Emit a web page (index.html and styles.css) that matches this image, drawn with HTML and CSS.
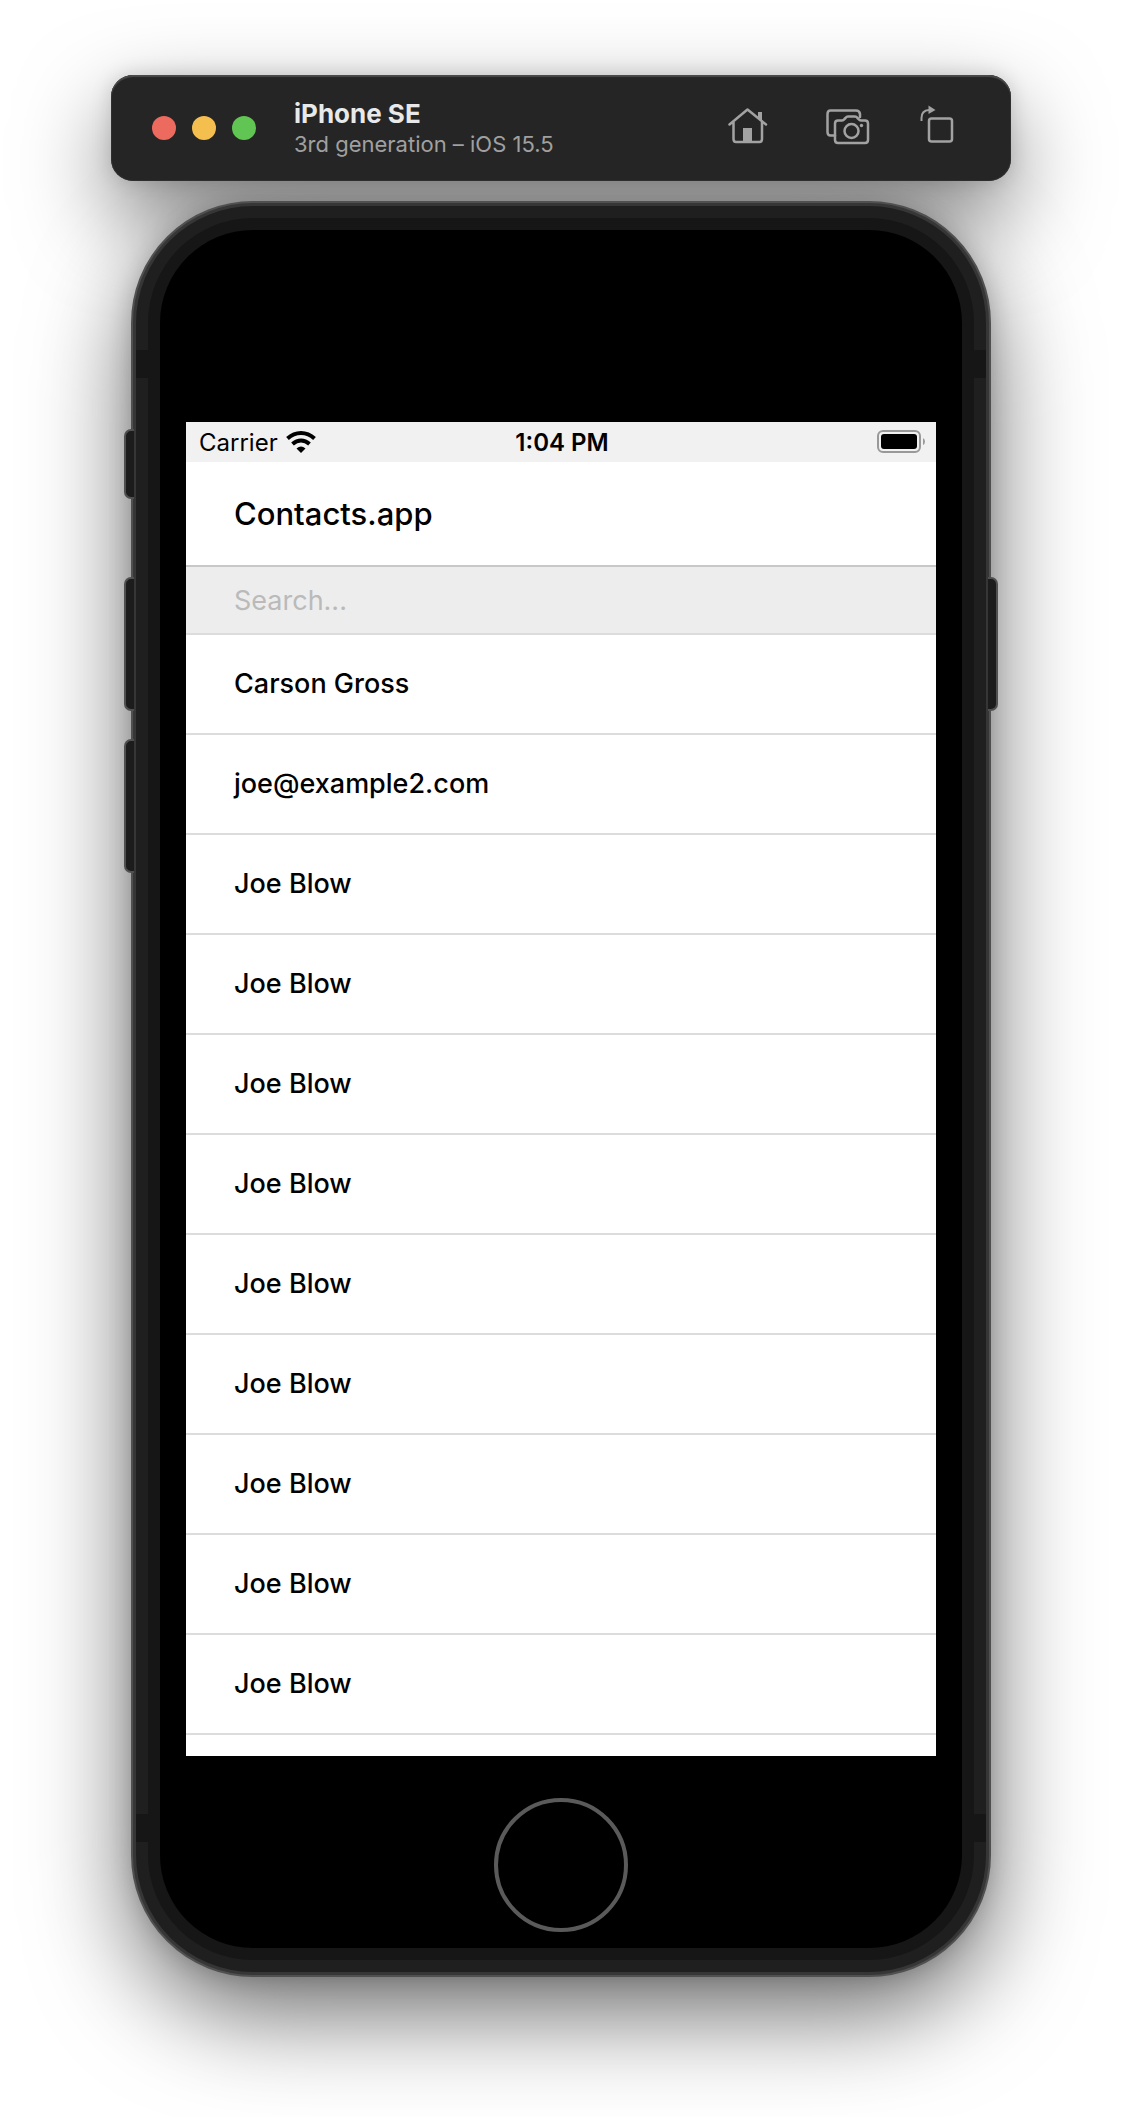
FILE: index.html
```html
<!DOCTYPE html>
<html lang="en">
<head>
  <meta charset="utf-8">
  <meta name="viewport" content="width=device-width, initial-scale=1">
  <title>iPhone SE</title>
  <link rel="stylesheet" href="styles.css">
</head>
<body>
  <div class="simulator">
    <header class="toolbar">
      <div class="lights">
        <button class="light light-close" type="button" aria-label="Close"></button>
        <button class="light light-minimize" type="button" aria-label="Minimize"></button>
        <button class="light light-zoom" type="button" aria-label="Zoom"></button>
      </div>
      <div class="device">
        <div class="device-name">iPhone SE</div>
        <div class="device-version">3rd generation – iOS 15.5</div>
      </div>
      <div class="tools">
        <button class="tool" type="button" aria-label="Home">
          <svg width="48" height="48" viewBox="0 0 48 48" fill="none" stroke="#a2a2a2" stroke-width="2.500" stroke-linecap="round" stroke-linejoin="round">
            <path d="M1.500 20.500 19.500 5.500 38 20.500M5.500 18V35Q5.500 38 8 38H31.500Q34 38 34 35V18"/>
            <path d="M30 8H34V17L30 13.500Z" fill="#a2a2a2" stroke="none"/>
            <path d="M15 24H24V38H15Z" fill="#a2a2a2" stroke="none"/>
          </svg>
        </button>
        <button class="tool" type="button" aria-label="Save screenshot">
          <svg width="44" height="48" viewBox="0 0 44 48" fill="none" stroke="#a2a2a2" stroke-width="2.500" stroke-linecap="round" stroke-linejoin="round">
            <path d="M9 31.500H4.500Q1.500 31.500 1.500 28V10Q1.500 6.500 4.500 6.500H30Q33.500 6.500 34 10V13"/>
            <path d="M12 16.500H16Q17.500 16.500 18.500 15L19.500 14Q20.500 12.500 22 12.500H29Q30.500 12.500 31.500 14L32.500 15Q33.500 16.500 35 16.500H39Q42 16.500 42 19.500V36Q42 39 39 39H12Q9 39 9 36V19.500Q9 16.500 12 16.500Z"/>
            <circle cx="25.500" cy="27" r="7"/>
            <circle cx="35.500" cy="21.500" r="1.700" fill="#a2a2a2" stroke="none"/>
          </svg>
        </button>
        <button class="tool" type="button" aria-label="Rotate">
          <svg width="34" height="48" viewBox="0 0 34 48" fill="none" stroke="#a2a2a2" stroke-width="2.500">
            <rect x="9" y="14.500" width="23" height="23" rx="2.500"/>
            <path d="M1.500 17V14Q1.500 6.500 9 6" stroke-width="2"/>
            <path d="M8.500 1.500 15.500 6 8.500 10Z" fill="#a2a2a2" stroke="none"/>
          </svg>
        </button>
      </div>
    </header>

    <main class="phone">
      <span class="side-key key-mute"></span>
      <span class="side-key key-volume-up"></span>
      <span class="side-key key-volume-down"></span>
      <span class="side-key key-power"></span>
      <div class="frame">
        <div class="bezel">
          <div class="face">
            <section class="screen">
              <div class="status">
                <div class="status-carrier">
                  <span>Carrier</span>
                  <svg width="30" height="22" viewBox="0 0 30 22" fill="none" stroke="#000" stroke-width="4">
                    <path d="M1.500 7.500Q7.500 2 15 2T28.500 7.500"/>
                    <path d="M6.500 13Q10.500 9.500 15 9.500T23.500 13"/>
                    <path d="M10.500 17.500Q15 13.500 19.500 17.500L15 22Z" fill="#000" stroke="none"/>
                  </svg>
                </div>
                <time class="status-time">1:04 PM</time>
                <div class="status-battery">
                  <svg width="48" height="24" viewBox="0 0 48 24">
                    <rect x="1" y="1" width="42" height="21" rx="5" fill="none" stroke="#999" stroke-width="2"/>
                    <rect x="4" y="4" width="36" height="15" rx="3" fill="#000"/>
                    <path d="M46 8Q48 9 48 11.500T46 15Z" fill="#999"/>
                  </svg>
                </div>
              </div>
              <h1 class="title">Contacts.app</h1>
              <input class="search" type="search" placeholder="Search..." aria-label="Search contacts">
              <ul class="contacts">
                <li><a class="contact" href="#">Carson Gross</a></li>
                <li><a class="contact" href="#">joe@example2.com</a></li>
                <li><a class="contact" href="#">Joe Blow</a></li>
                <li><a class="contact" href="#">Joe Blow</a></li>
                <li><a class="contact" href="#">Joe Blow</a></li>
                <li><a class="contact" href="#">Joe Blow</a></li>
                <li><a class="contact" href="#">Joe Blow</a></li>
                <li><a class="contact" href="#">Joe Blow</a></li>
                <li><a class="contact" href="#">Joe Blow</a></li>
                <li><a class="contact" href="#">Joe Blow</a></li>
                <li><a class="contact" href="#">Joe Blow</a></li>
              </ul>
            </section>
            <button class="home-key" type="button" aria-label="Home button"></button>
          </div>
        </div>
      </div>
    </main>
  </div>
</body>
</html>
```
FILE: styles.css
```css
* {
  box-sizing: border-box;
}

body {
  margin: 0;
  background: #fff;
  color: #000;
  font-family: Inter, "Liberation Sans", sans-serif;
}

button {
  padding: 0;
  border: 0;
  background: none;
}

svg {
  display: block;
}

.simulator {
  isolation: isolate;
  display: flex;
  flex-direction: column;
  align-items: center;
  gap: 20px;
  max-width: 900px;
  margin: 0 auto;
  padding: 75px 0 140px;
}

/* Simulator window bar */
.toolbar {
  position: relative;
  display: flex;
  align-items: center;
  width: 100%;
  min-height: 106px;
  padding: 0 57px 0 41px;
  border-radius: 22px;
  background: #252525;
  box-shadow: inset 0 2px 1px #4a4a4a, inset 0 0 1px 1px #303030;
}

/* Drop shadows sit behind both the bar and the phone */
.toolbar::before,
.phone::before {
  content: "";
  position: absolute;
  inset: 0;
  z-index: -1;
  border-radius: inherit;
}

.toolbar::before {
  box-shadow: 0 36px 90px rgba(0, 0, 0, 0.5), 0 0 20px rgba(0, 0, 0, 0.15);
}

.phone::before {
  box-shadow: 0 0 24px rgba(0, 0, 0, 0.2), 0 36px 100px rgba(0, 0, 0, 0.6);
}

.lights {
  display: flex;
  gap: 16px;
}

.light {
  width: 24px;
  height: 24px;
  border-radius: 50%;
}

.light-close {
  background: #ed6a5f;
}

.light-minimize {
  background: #f5bf4f;
}

.light-zoom {
  background: #61c554;
}

.device {
  flex: 1;
  margin-left: 38px;
  padding-top: 2px;
  line-height: 30px;
}

.device-name {
  color: #e9e9e9;
  font-size: 26px;
  font-weight: 700;
}

.device-version {
  color: #a0a0a0;
  font-size: 22px;
}

.tools {
  display: flex;
  gap: 50px;
}

/* Phone body, from the outer rim inwards */
.phone {
  position: relative;
  width: calc(100% - 40px);
  padding: 3px;
  border: 2px solid #505050;
  border-radius: 122px;
  background: #363636;
}

.frame {
  padding: 12px;
  border-radius: 117px;
  background:
    linear-gradient(#161616, #161616) 0 144px / 100% 28px no-repeat,
    linear-gradient(#161616, #161616) 0 calc(100% - 130px) / 100% 28px no-repeat,
    #1f1f1f;
}

.bezel {
  padding: 12px;
  border-radius: 105px;
  background: #161616;
}

.face {
  display: flex;
  flex-direction: column;
  align-items: center;
  gap: 42px;
  padding: 192px 26px 16px;
  border-radius: 93px;
  background: #000;
}

.side-key {
  position: absolute;
  left: -9px;
  width: 10px;
  height: 134px;
  border: 2px solid #505050;
  border-right: 0;
  border-radius: 7px 0 0 7px;
  background: #1c1c1c;
}

.key-mute {
  top: 226px;
  height: 70px;
}

.key-volume-up {
  top: 374px;
}

.key-volume-down {
  top: 536px;
}

.key-power {
  top: 374px;
  right: -9px;
  left: auto;
  border-right: 2px solid #505050;
  border-left: 0;
  border-radius: 0 7px 7px 0;
}

.home-key {
  width: 134px;
  height: 134px;
  border: 4px solid #5a5a5a;
  border-radius: 50%;
}

/* Contacts application */
.screen {
  width: 100%;
  aspect-ratio: 375 / 667;
  background: #fff;
}

.status {
  display: grid;
  grid-template-columns: 1fr auto 1fr;
  align-items: center;
  height: 40px;
  padding: 0 11px 0 13px;
  background: #f1f1f1;
  font-size: 24px;
}

.status-carrier {
  display: flex;
  align-items: center;
  gap: 8px;
}

.status-time {
  font-weight: 600;
}

.status-battery {
  justify-self: end;
}

.title {
  margin: 0;
  padding: 0 48px;
  border-bottom: 2px solid #c8c8c8;
  font-size: 31px;
  font-weight: 500;
  line-height: 103px;
}

.search {
  display: block;
  width: 100%;
  height: 68px;
  margin: 0;
  padding: 0 48px;
  border: 0;
  border-bottom: 2px solid #dcdcdc;
  border-radius: 0;
  outline: 0;
  background: #ededed;
  font: 400 27px Inter, "Liberation Sans", sans-serif;
  appearance: none;
}

.search::placeholder {
  color: #bababa;
}

.contacts {
  margin: 0;
  padding: 0;
  list-style: none;
}

.contact {
  display: block;
  padding: 0 48px;
  border-bottom: 2px solid #dcdcdc;
  color: #000;
  font-size: 27px;
  font-weight: 500;
  line-height: 98px;
  text-decoration: none;
}
```
